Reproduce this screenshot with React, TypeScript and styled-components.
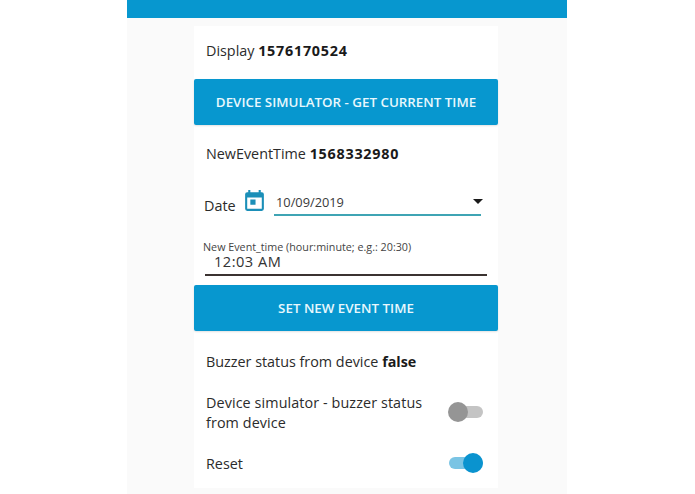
import React from "react";
import styled, { createGlobalStyle } from "styled-components";

const Global = createGlobalStyle`
  html, body { margin: 0; padding: 0; background: #fff; overflow: hidden; }
  body { font-family: "Open Sans", "Noto Sans", "Liberation Sans", sans-serif; color: #212121; }
`;
const Shell = styled.div`
  width: 440px; height: 494px; margin-left: 127px; background: #fafafa;
  display: flex; flex-direction: column;
`;
const Header = styled.header`height: 18px; background: #0797cf; flex: none;`;
const Card = styled.main`
  width: 304px; margin: 8px 0 0 67px; height: 462px; background: #fff;
  display: flex; flex-direction: column;
`;
const Line = styled.p<{ $h: number; $pb?: number }>`
  margin: 0; padding: 0 0 ${p => p.$pb ?? 0}px 12px; box-sizing: border-box; height: ${p => p.$h}px;
  display: flex; align-items: center; flex: none;
  font-size: 14.35px; white-space: pre; color: #2b2b2b;
  b { font-weight: 700; color: #1a1a1a; }
`;
const Reading = styled.b`font-size: 14.35px; letter-spacing: .75px;`;
const Action = styled.button`
  flex: none; width: 304px; height: 46px; border: 0; border-radius: 2px; background: #0797cf;
  color: #e8f7fd; font: 600 13.35px "Open Sans", sans-serif; text-transform: uppercase; padding: 0;
  box-shadow: 0 1px 2px rgba(0,0,0,.12);
`;
const DateRow = styled.div`
  height: 50px; flex: none; display: flex; align-items: flex-start; padding-left: 10px;
`;
const DateLabel = styled.span`font-size: 14.4px; line-height: 20px; color: #2b2b2b; margin-top: 13px; width: 36px; flex: none;`;
const CalendarIcon = styled.svg`width: 25px; height: 25px; margin: 5px 0 0 2px; flex: none; color: #1b8fb8;`;
const DateField = styled.div`
  width: 207px; height: 27px; margin: 6px 0 0 7px; box-sizing: border-box; padding: 5px 0 0 2px;
  border-bottom: 2px solid #3fa4b4; display: flex; justify-content: space-between;
  font-size: 12.8px; line-height: 17px; color: #3a3a3a;
`;
const Caret = styled.i`
  width: 0; height: 0; margin: 5px -2px 0 0; border: 5px solid transparent; border-top-color: #1a1a1a; border-bottom: 0;
`;
const TimeBlock = styled.div`height: 52px; flex: none; padding: 7px 0 0 9px; box-sizing: border-box;`;
const TimeLabel = styled.div`font-size: 10.75px; line-height: 14px; color: #444;`;
const TimeValue = styled.div`
  width: 282px; margin-left: 2px; height: 22px; box-sizing: border-box; padding: 0 0 0 9px;
  border-bottom: 2px solid #3b3331; font-size: 14.6px; line-height: 15px; letter-spacing: .5px; color: #333;
`;
const ToggleRow = styled.div<{ $h: number; $pt?: number }>`
  height: ${p => p.$h}px; flex: none; box-sizing: border-box; display: flex; align-items: center; justify-content: space-between;
  padding: ${p => p.$pt ?? 0}px 15px 0 12px; font-size: 14.35px; line-height: 20px; color: #2b2b2b;
`;
const ToggleText = styled.span`width: 225px; letter-spacing: .1px;`;
const Toggle = styled.span<{ $on?: boolean }>`
  width: 34px; height: 12px; margin-bottom: 2px; border-radius: 6px; position: relative; flex: none;
  background: ${p => (p.$on ? "#7ac4e4" : "#c4c4c4")};
  &::after {
    content: ""; position: absolute; top: -4px; width: 20px; height: 20px; border-radius: 50%;
    left: ${p => (p.$on ? "14px" : "-1px")};
    background: ${p => (p.$on ? "#0a93cf" : "#959595")};
  }
`;

export default function App() {
  return (
    <>
      <Global />
      <Shell>
        <Header />
        <Card>
          <Line $h={53} $pb={4}>Display <Reading>1576170524</Reading></Line>
          <Action>Device simulator - get current time</Action>
          <Line $h={58} $pb={1}>NewEventTime <Reading>1568332980</Reading></Line>
          <DateRow>
            <DateLabel>Date</DateLabel>
            <CalendarIcon viewBox="0 0 24 24" fill="currentColor">
              <path d="M19 4h-1V2h-2v2H8V2H6v2H5a2 2 0 0 0-2 2v14a2 2 0 0 0 2 2h14a2 2 0 0 0 2-2V6a2 2 0 0 0-2-2zm0 16H5V9h14v11zM8 11h5v5H8z" />
            </CalendarIcon>
            <DateField>10/09/2019<Caret /></DateField>
          </DateRow>
          <TimeBlock>
            <TimeLabel>New Event_time (hour:minute; e.g.: 20:30)</TimeLabel>
            <TimeValue>12:03 AM</TimeValue>
          </TimeBlock>
          <Action>Set new event time</Action>
          <Line $h={60}>Buzzer status from device <b>false</b></Line>
          <ToggleRow $h={44}>
            <ToggleText>Device simulator - buzzer status from device</ToggleText>
            <Toggle />
          </ToggleRow>
          <ToggleRow $h={53} $pt={5}>
            <span>Reset</span>
            <Toggle $on />
          </ToggleRow>
        </Card>
      </Shell>
    </>
  );
}
